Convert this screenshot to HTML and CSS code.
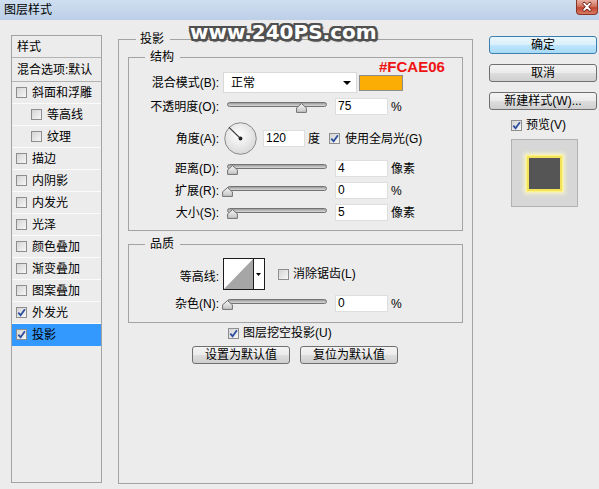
FILE: index.html
```html
<!DOCTYPE html>
<html lang="zh-CN">
<head>
<meta charset="utf-8">
<title>图层样式</title>
<link rel="stylesheet" href="styles.css">
</head>
<body>
<div class="dialog">
  <div class="titlebar">
    <span class="title">图层样式</span>
    <span class="close"><svg width="21" height="14" viewBox="0 0 21 14"><path d="M7.5 3.5 L13.5 10 M13.5 3.5 L7.5 10" stroke="#6a1e14" stroke-width="3.6" stroke-linecap="round"/><path d="M7.5 3.5 L13.5 10 M13.5 3.5 L7.5 10" stroke="#fff" stroke-width="2" stroke-linecap="round"/></svg></span>
  </div>
  <div class="content">
    <div class="sidebar">
      <div class="side-row head">样式</div>
      <div class="side-row head blend">混合选项:默认</div>
      <div class="side-row"><span class="cb"></span>斜面和浮雕</div>
      <div class="side-row sub"><span class="cb"></span>等高线</div>
      <div class="side-row sub"><span class="cb"></span>纹理</div>
      <div class="side-row"><span class="cb"></span>描边</div>
      <div class="side-row"><span class="cb"></span>内阴影</div>
      <div class="side-row"><span class="cb"></span>内发光</div>
      <div class="side-row"><span class="cb"></span>光泽</div>
      <div class="side-row"><span class="cb"></span>颜色叠加</div>
      <div class="side-row"><span class="cb"></span>渐变叠加</div>
      <div class="side-row"><span class="cb"></span>图案叠加</div>
      <div class="side-row"><span class="cb on"><svg width="9" height="9" viewBox="0 0 9 9"><path d="M1.3 4.6 L3.6 7.2 L7.9 1.2" fill="none" stroke="#2d4f9f" stroke-width="1.8"/></svg></span>外发光</div>
      <div class="side-row selected"><span class="cb on"><svg width="9" height="9" viewBox="0 0 9 9"><path d="M1.3 4.6 L3.6 7.2 L7.9 1.2" fill="none" stroke="#2d4f9f" stroke-width="1.8"/></svg></span>投影</div>
    </div>

    <fieldset class="panel">
      <legend>投影</legend>
      <div class="panel-body">
        <fieldset class="group struct">
          <legend>结构</legend>
          <div class="row r-mode">
            <span class="lab">混合模式(B):</span>
            <div class="select"><span>正常</span><span class="caret"></span></div>
            <span class="swatch"></span>
          </div>
          <div class="row r-op">
            <span class="lab">不透明度(O):</span>
            <div class="slider"><div class="track"></div><svg class="thumb" style="left:69px" width="11" height="10" viewBox="0 0 11 10"><defs><linearGradient id="tg1" x1="0" y1="0" x2="0" y2="1"><stop offset="0" stop-color="#f4f4f4"/><stop offset="1" stop-color="#c4c4c4"/></linearGradient></defs><path d="M5.5 0.6 L10.4 4.8 L10.4 9.4 L0.6 9.4 L0.6 4.8 Z" fill="url(#tg1)" stroke="#707070"/></svg></div>
            <span class="num">75</span>
            <span class="unit">%</span>
          </div>
          <div class="row r-angle">
            <span class="lab">角度(A):</span>
            <svg class="dial" width="33" height="33" viewBox="0 0 33 33"><defs><radialGradient id="dg" cx="45%" cy="40%" r="65%"><stop offset="0" stop-color="#ffffff"/><stop offset="1" stop-color="#d6d6d6"/></radialGradient></defs><circle cx="16.5" cy="16.5" r="15.8" fill="url(#dg)" stroke="#8a8a8a"/><line x1="16.5" y1="16.5" x2="5" y2="5.3" stroke="#3a3a3a" stroke-width="1.1"/><circle cx="16.5" cy="16.5" r="1.9" fill="#222"/></svg>
            <span class="num w42">120</span>
            <span class="deg">度</span>
            <span class="cb on gl"><svg width="9" height="9" viewBox="0 0 9 9"><path d="M1.3 4.6 L3.6 7.2 L7.9 1.2" fill="none" stroke="#2d4f9f" stroke-width="1.8"/></svg></span>
            <span class="cbtext">使用全局光(G)</span>
          </div>
          <div class="row r-dist">
            <span class="lab">距离(D):</span>
            <div class="slider"><div class="track"></div><svg class="thumb" style="left:0px" width="11" height="10" viewBox="0 0 11 10"><path d="M5.5 0.6 L10.4 4.8 L10.4 9.4 L0.6 9.4 L0.6 4.8 Z" fill="url(#tg1)" stroke="#707070"/></svg></div>
            <span class="num">4</span>
            <span class="unit">像素</span>
          </div>
          <div class="row r-next">
            <span class="lab">扩展(R):</span>
            <div class="slider"><div class="track"></div><svg class="thumb" style="left:-5px" width="11" height="10" viewBox="0 0 11 10"><path d="M5.5 0.6 L10.4 4.8 L10.4 9.4 L0.6 9.4 L0.6 4.8 Z" fill="url(#tg1)" stroke="#707070"/></svg></div>
            <span class="num">0</span>
            <span class="unit">%</span>
          </div>
          <div class="row r-next">
            <span class="lab">大小(S):</span>
            <div class="slider"><div class="track"></div><svg class="thumb" style="left:0px" width="11" height="10" viewBox="0 0 11 10"><path d="M5.5 0.6 L10.4 4.8 L10.4 9.4 L0.6 9.4 L0.6 4.8 Z" fill="url(#tg1)" stroke="#707070"/></svg></div>
            <span class="num">5</span>
            <span class="unit">像素</span>
          </div>
        </fieldset>

        <fieldset class="group quality">
          <legend>品质</legend>
          <div class="row r-contour">
            <span class="lab">等高线:</span>
            <svg class="contour" width="42" height="32" viewBox="0 0 42 32"><rect x="0.5" y="0.5" width="41" height="31" fill="#fff" stroke="#1c1c1c"/><polygon points="1,31 30,1 30,31" fill="#a6a6a6"/><line x1="30.5" y1="0" x2="30.5" y2="32" stroke="#1c1c1c"/><polygon points="33,15 38,15 35.5,18" fill="#000"/></svg>
            <span class="cb aa"></span>
            <span class="cbtext">消除锯齿(L)</span>
          </div>
          <div class="row r-noise">
            <span class="lab">杂色(N):</span>
            <div class="slider"><div class="track"></div><svg class="thumb" style="left:-5px" width="11" height="10" viewBox="0 0 11 10"><path d="M5.5 0.6 L10.4 4.8 L10.4 9.4 L0.6 9.4 L0.6 4.8 Z" fill="url(#tg1)" stroke="#707070"/></svg></div>
            <span class="num">0</span>
            <span class="unit">%</span>
          </div>
        </fieldset>

        <div class="knockout">
          <span class="cb on"><svg width="9" height="9" viewBox="0 0 9 9"><path d="M1.3 4.6 L3.6 7.2 L7.9 1.2" fill="none" stroke="#2d4f9f" stroke-width="1.8"/></svg></span>
          <span class="cbtext">图层挖空投影(U)</span>
        </div>
        <div class="defaults">
          <button class="btn">设置为默认值</button>
          <button class="btn">复位为默认值</button>
        </div>
      </div>
    </fieldset>

    <div class="side-col">
      <button class="btn primary">确定</button>
      <button class="btn">取消</button>
      <button class="btn">新建样式(W)...</button>
      <div class="preview-row">
        <span class="cb on"><svg width="9" height="9" viewBox="0 0 9 9"><path d="M1.3 4.6 L3.6 7.2 L7.9 1.2" fill="none" stroke="#2d4f9f" stroke-width="1.8"/></svg></span>
        <span class="cbtext">预览(V)</span>
      </div>
      <div class="preview"><span class="sample"></span></div>
    </div>
  </div>

  <div class="watermark">www.240PS.com</div>
  <div class="hex">#FCAE06</div>
</div>
</body>
</html>
```

FILE: styles.css
```css
* { box-sizing: border-box; }
html, body { margin: 0; padding: 0; }
body {
  background: #ececec;
  font-family: "Liberation Sans", "Noto Sans CJK SC", sans-serif;
  font-size: 12px;
  line-height: 16px;
  color: #000;
}
.dialog {
  position: relative;
  width: 599px;
  height: 489px;
  overflow: hidden;
  background: #ececec;
}

/* title bar */
.titlebar {
  height: 20px;
  display: flex;
  align-items: flex-start;
  background: linear-gradient(#cfdff1, #bccfe7);
}
.title { margin: 2px 0 0 4px; }
.close {
  margin-left: auto;
  margin-right: 1px;
  width: 22px;
  height: 15px;
  border: 1px solid #8a3426;
  border-top: none;
  border-radius: 0 0 4px 4px;
  background: linear-gradient(#e8b0a3, #d37461 45%, #c2452f 55%, #d77a63);
  display: flex;
  align-items: center;
  justify-content: center;
}

.content {
  display: flex;
  align-items: flex-start;
  padding-left: 11px;
}

/* sidebar */
.sidebar {
  flex: none;
  margin-top: 15px;
  width: 91px;
  height: 448px;
  border: 1px solid #a3a3a3;
}
.side-row {
  height: 22px;
  display: flex;
  align-items: center;
  padding-left: 4px;
  border-bottom: 1px solid #fbfbfb;
}
.side-row.head { padding-left: 5px; border-bottom-color: #b3b3b3; }
.side-row.blend { height: 24px; }
.side-row.sub { padding-left: 19px; }
.side-row .cb { margin-right: 5px; }
.side-row.selected { background: #3399ff; border-bottom-color: #3399ff; }

/* checkbox */
.cb {
  flex: none;
  width: 11px;
  height: 11px;
  border: 1px solid #8e8e8e;
  background: linear-gradient(135deg, #d4d4d4, #f7f7f7);
  display: inline-flex;
  align-items: center;
  justify-content: center;
}
.cb svg { display: block; }
.cbtext { white-space: nowrap; }

/* fieldsets */
fieldset {
  margin: 0;
  padding: 0;
  min-width: 0;
  border: 1px solid #a3a3a3;
}
legend { padding: 0; line-height: 16px; }
.panel {
  flex: none;
  margin: 11px 0 0 16px;
  width: 355px;
  height: 453px;
}
.panel > legend { margin-left: 17px; padding: 0 6px 0 4px; }
.panel-body { padding: 0 9px; }
.group { width: 335px; }
.group > legend { margin-left: 16px; padding: 0 6px 0 5px; }
.struct { margin-top: 2px; padding: 7px 0 9px; }
.quality { margin-top: 5px; padding: 6px 0 10px; }

.row { display: flex; align-items: center; }
.lab { flex: none; width: 90px; text-align: right; white-space: nowrap; }
.r-mode { height: 21px; }
.r-op { height: 17px; margin-top: 5px; }
.r-angle { height: 33px; margin-top: 7px; }
.r-dist { height: 17px; margin-top: 5px; }
.r-next { height: 17px; margin-top: 5px; }
.r-contour { height: 32px; }
.r-contour .lab { padding-top: 5px; }
.r-noise { height: 17px; margin-top: 5px; }

.select {
  flex: none;
  margin-left: 4px;
  width: 134px;
  height: 21px;
  background: #fff;
  border: 1px solid #d9d9d9;
  display: flex;
  align-items: center;
  justify-content: space-between;
  padding: 0 5px 0 7px;
}
.caret {
  width: 0;
  height: 0;
  border-left: 4px solid transparent;
  border-right: 4px solid transparent;
  border-top: 4px solid #000;
}
.swatch {
  flex: none;
  margin-left: 2px;
  width: 44px;
  height: 16px;
  background: #fbad06;
  border: 1px solid #8c8c8c;
}

.slider {
  flex: none;
  position: relative;
  margin-left: 8px;
  width: 100px;
  height: 17px;
}
.track {
  margin-top: 4px;
  height: 5px;
  border: 1px solid #737373;
  border-radius: 3px;
  background: linear-gradient(#9c9c9c, #d9d9d9);
}
.thumb { position: absolute; top: 5px; display: block; }

.num {
  flex: none;
  margin-left: 8px;
  width: 53px;
  height: 17px;
  background: #fff;
  border: 1px solid #dedede;
  padding-left: 2px;
  line-height: 15px;
}
.num.w42 { width: 42px; margin-left: 6px; }
.unit { margin-left: 3px; white-space: nowrap; }

.dial { flex: none; display: block; margin-left: 5px; }
.deg { margin-left: 3px; }
.gl { margin-left: 9px; }
.r-angle .cbtext { margin-left: 5px; }

.contour { flex: none; display: block; margin-left: 4px; }
.aa { margin-left: 13px; }
.r-contour .cbtext { margin-left: 4px; }

.knockout {
  margin-top: 2px;
  height: 16px;
  display: flex;
  align-items: center;
  padding-left: 100px;
}
.knockout .cbtext { margin-left: 4px; }
.defaults {
  margin-top: 5px;
  display: flex;
  gap: 10px;
  padding-left: 64px;
}
.defaults .btn { width: 98px; }

/* buttons */
.btn {
  display: block;
  width: 108px;
  height: 18px;
  padding: 0;
  margin: 0;
  font: inherit;
  line-height: 16px;
  color: #000;
  text-align: center;
  border: 1px solid #707070;
  border-radius: 3px;
  background: linear-gradient(#f3f3f3 0%, #ebebeb 48%, #dddddd 52%, #cfcfcf 100%);
}
.btn.primary {
  border-color: #3c7fb1;
  background: linear-gradient(#eaf6fd 0%, #d9f0fc 48%, #bee6fd 52%, #a7d9f5 100%);
}

.side-col {
  flex: none;
  margin: 16px 0 0 16px;
  width: 108px;
}
.side-col .btn + .btn { margin-top: 10px; }
.preview-row {
  margin-top: 7px;
  height: 16px;
  display: flex;
  align-items: center;
  padding-left: 22px;
}
.preview-row .cbtext { margin-left: 4px; }
.preview {
  margin: 6px 0 0 22px;
  width: 67px;
  height: 68px;
  background: #d7d7d7;
  border: 1px solid #b2b2b2;
  display: flex;
  align-items: center;
  justify-content: center;
}
.sample {
  width: 31px;
  height: 31px;
  background: #555555;
  box-shadow: 0 0 0 2px #f3e35a, 0 0 1px 3px #fff38c, 0 0 4px 5px rgba(255, 252, 200, 0.8);
}

/* overlays */
.watermark {
  position: absolute;
  left: 190px;
  top: 22px;
  font-family: "DejaVu Sans", sans-serif;
  font-weight: bold;
  font-size: 20px;
  line-height: 20px;
  color: #fff;
  white-space: nowrap;
  text-shadow:
    2px 0 0 #505050, -2px 0 0 #505050, 0 2px 0 #505050, 0 -2px 0 #505050,
    2px 2px 0 #505050, -2px -2px 0 #505050, 2px -2px 0 #505050, -2px 2px 0 #505050,
    1px 3px 1px #6a6a6a, 3px 1px 1px #6a6a6a;
}
.hex {
  position: absolute;
  left: 379px;
  top: 59px;
  font-family: "Liberation Sans", sans-serif;
  font-weight: bold;
  font-size: 15px;
  line-height: 15px;
  color: #ef1414;
}
```
